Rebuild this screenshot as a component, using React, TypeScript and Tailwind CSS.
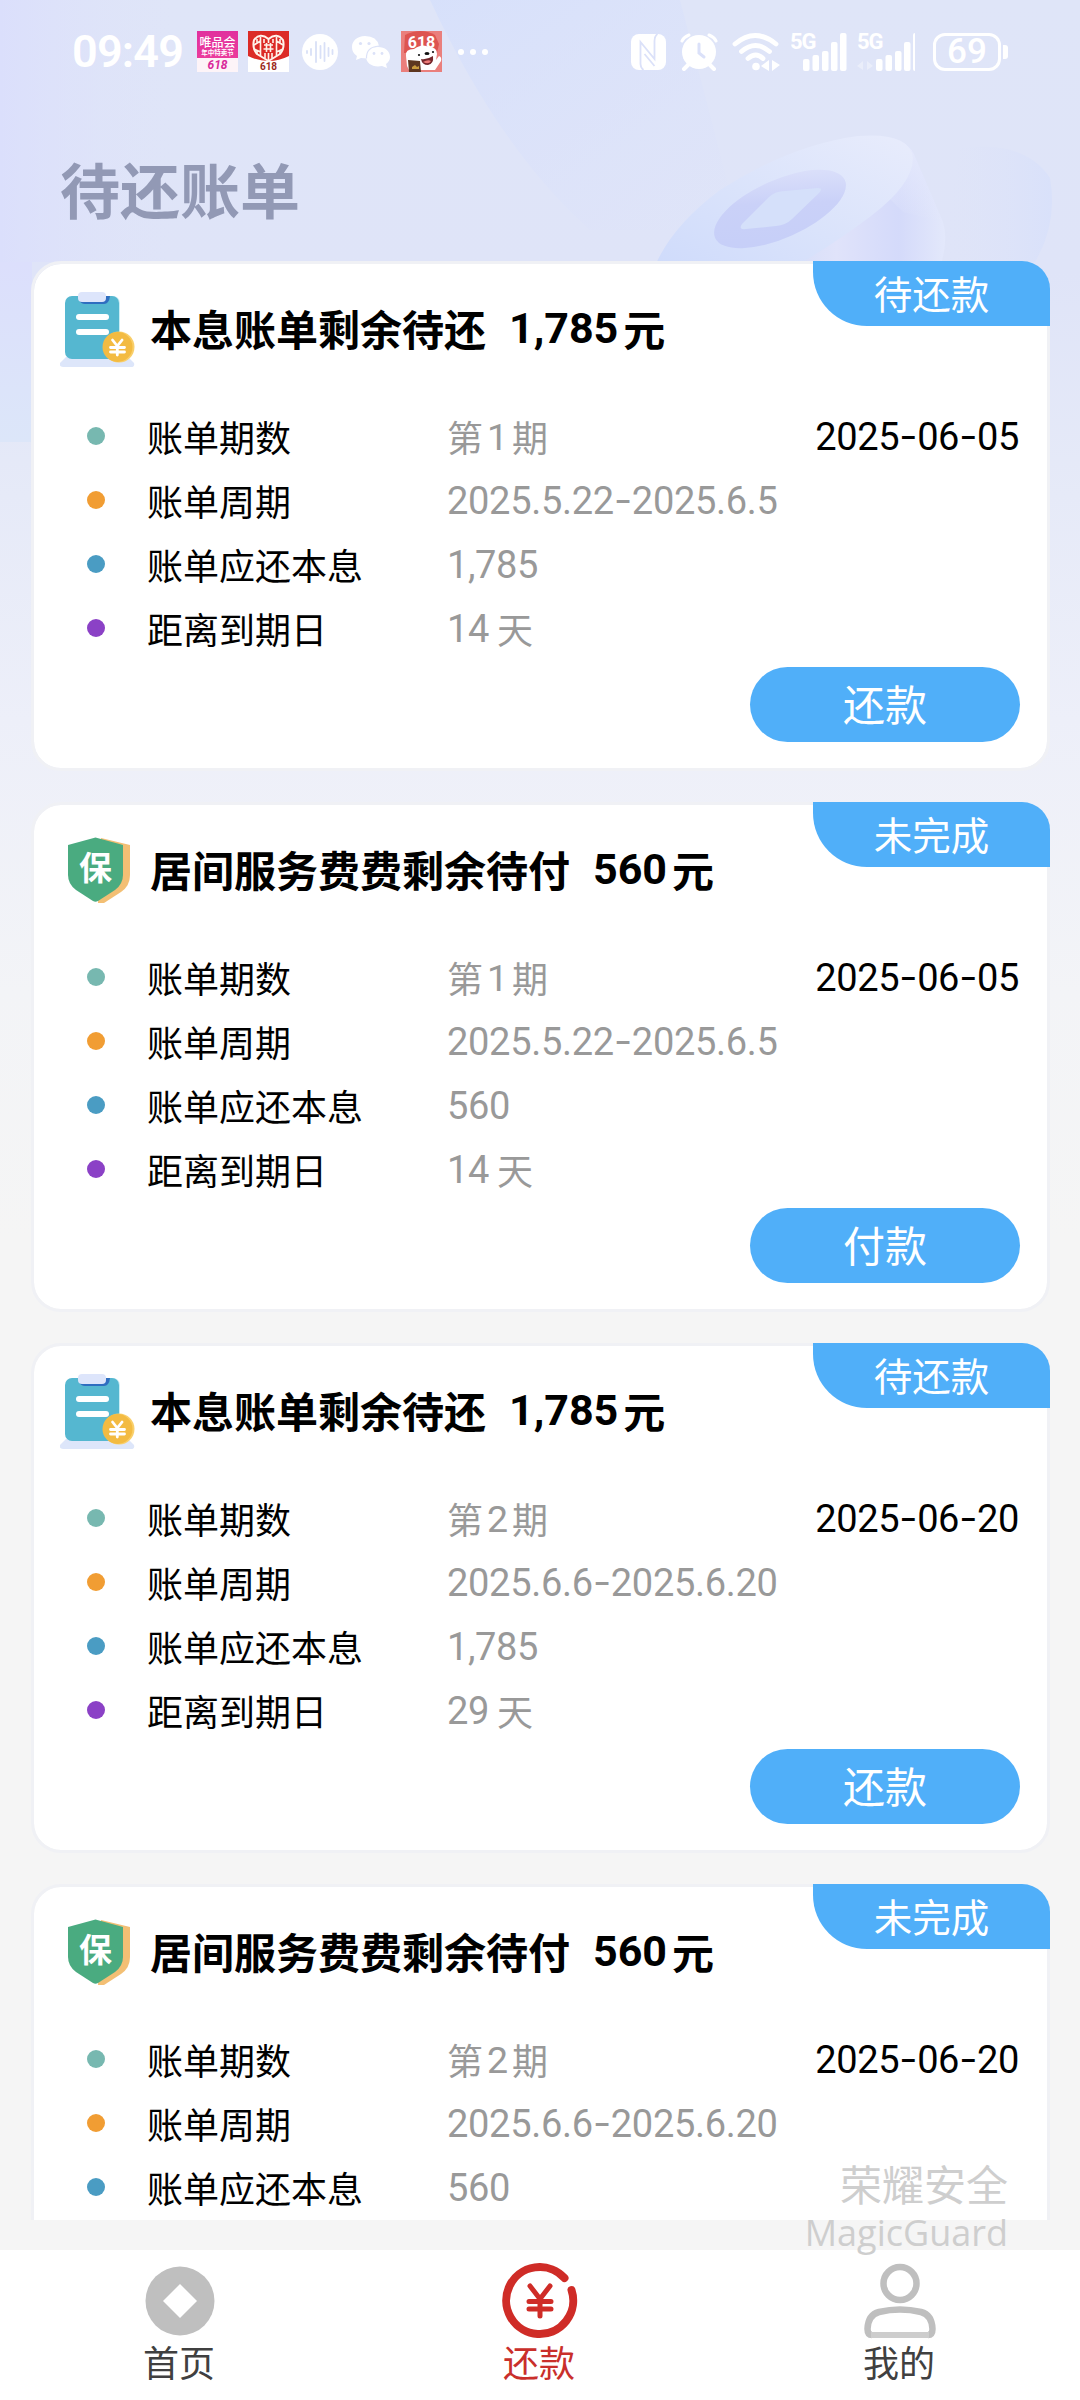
import React from "react";

type Bill = {
  kind: "principal" | "service";
  title: string;
  amount: string;
  tag: string;
  period: string;
  date: string;
  cycle: string;
  due: string;
  days?: string;
  action?: string;
};

const bills: Bill[] = [
  { kind: "principal", title: "本息账单剩余待还", amount: "1,785", tag: "待还款", period: "1", date: "2025-06-05", cycle: "2025.5.22-2025.6.5", due: "1,785", days: "14", action: "还款" },
  { kind: "service", title: "居间服务费费剩余待付", amount: "560", tag: "未完成", period: "1", date: "2025-06-05", cycle: "2025.5.22-2025.6.5", due: "560", days: "14", action: "付款" },
  { kind: "principal", title: "本息账单剩余待还", amount: "1,785", tag: "待还款", period: "2", date: "2025-06-20", cycle: "2025.6.6-2025.6.20", due: "1,785", days: "29", action: "还款" },
  { kind: "service", title: "居间服务费费剩余待付", amount: "560", tag: "未完成", period: "2", date: "2025-06-20", cycle: "2025.6.6-2025.6.20", due: "560" },
];

const CJK = "font-['Noto_Sans_CJK_SC',sans-serif]";
const NUM = "font-['Roboto',sans-serif]";

function Dashes({ text }: { text: string }) {
  const parts = text.split("-");
  return (
    <>
      {parts.map((p, i) => (
        <React.Fragment key={i}>
          {i > 0 && <span className="inline-block w-[18px] text-center origin-center scale-x-[1.4] relative -top-[1px]">-</span>}
          {p}
        </React.Fragment>
      ))}
    </>
  );
}

function BillIcon() {
  return (
    <svg className="w-[76px] h-[76px]" viewBox="0 0 76 76">
      <rect x="10" y="5" width="50" height="62" rx="7" fill="#c9edf5" />
      <path d="M6 66h62l6 6q1 4-3 4H3q-4 0-3-4z" fill="#dde6fa" />
      <rect x="5" y="5" width="54" height="63" rx="7" fill="#55b7d0" />
      <path d="M19 5h31q-1 8-6 8H25q-4 0-6-4z" fill="#2f6ec0" />
      <rect x="18" y="1" width="28" height="10" rx="4" fill="#dde5fb" />
      <rect x="16" y="23" width="33" height="6" rx="3" fill="#fff" />
      <rect x="16" y="38" width="33" height="6" rx="3" fill="#fff" />
      <circle cx="59" cy="56" r="15.5" fill="#f9cf6a" />
      <circle cx="57.500" cy="56" r="15" fill="#f3bb42" />
      <path d="M52.500 49l4.800 6 4.800-6M57.300 55v9M50.500 56.500h14M50.500 61h14" stroke="#fff" strokeWidth="2.800" fill="none" strokeLinecap="round" />
    </svg>
  );
}

function ShieldIcon() {
  return (
    <div className="relative w-[76px] h-[76px]">
      <svg className="w-[76px] h-[76px]" viewBox="0 0 76 76">
        <path d="M41 6l29 7v30q0 11-9 17L44 71h-6z" fill="#f3bf74" />
        <path d="M35.500 5.500L63 13v30q0 9-8 15L38 69q-2.500 1.500-5 0L16 58q-8-6-8-15V13z" fill="#4aab80" />
      </svg>
      <span className={`absolute left-0 top-[15px] w-[71px] h-[38px] leading-[38px] text-center text-white font-bold text-[33px] ${CJK}`}>保</span>
    </div>
  );
}

function Row({ dot, label, children, right }: { dot: string; label: string; children: React.ReactNode; right?: string }) {
  return (
    <div className="flex items-center h-[64px] pb-[3px]">
      <span className={`ml-[53px] w-[18px] h-[18px] rounded-full ${dot}`} />
      <span className="ml-[42px] w-[300px] text-[36px] text-black">{label}</span>
      <span className="text-[#999] flex items-center whitespace-pre text-[36px]">{children}</span>
      {right && <span className={`mt-[3px] ml-auto mr-[28px] text-black text-[38px] tracking-[-0.4px] ${NUM}`}><Dashes text={right} /></span>}
    </div>
  );
}

function Card({ bill }: { bill: Bill }) {
  return (
    <section className="relative w-[1019px] h-[510px] shrink-0 rounded-[30px] border-[3px] border-[#f0f1f5] bg-white bg-clip-padding">
      <div className="absolute -top-[3px] -right-[3px] w-[237px] h-[65px] rounded-tr-[28px] rounded-bl-[54px] bg-[#50aff9] text-white text-[38.500px] leading-[62px] text-center">
        {bill.tag}
      </div>
      <div className="flex items-center mt-[23px] ml-[26px] h-[84px]">
        {bill.kind === "principal" ? <BillIcon /> : <ShieldIcon />}
        <h2 className="ml-[14px] -mt-[3px] flex items-center text-[42px] font-bold text-black leading-none whitespace-nowrap">
          {bill.title}
          <span className={`mt-[2px] ml-[23px] text-[43px] ${NUM}`}>{bill.amount}</span>
          <span className="ml-[5px]">元</span>
        </h2>
      </div>
      <div className="mt-[34px]">
        <Row dot="bg-[#77b8b0]" label="账单期数" right={bill.date}>
          第<span className={`mt-[3px] text-[37.500px] w-[29px] text-center ${NUM}`}>{bill.period}</span>期
        </Row>
        <Row dot="bg-[#f19d33]" label="账单周期">
          <span className={`mt-[3px] text-[38px] tracking-[-0.3px] ${NUM}`}><Dashes text={bill.cycle} /></span>
        </Row>
        <Row dot="bg-[#4a9cc3]" label="账单应还本息">
          <span className={`mt-[3px] text-[38px] tracking-[-0.4px] ${NUM}`}>{bill.due}</span>
        </Row>
        {bill.days && (
          <Row dot="bg-[#8b41c6]" label="距离到期日">
            <span className={`mt-[3px] text-[38px] mr-[8px] tracking-[-0.4px] ${NUM}`}>{bill.days}</span>天
          </Row>
        )}
      </div>
      {bill.action && (
        <button className="block mt-[6px] ml-auto mr-[27px] w-[270px] h-[75px] pb-[3px] rounded-full bg-[#50aff9] text-white text-[42px] leading-[72px] text-center">
          {bill.action}
        </button>
      )}
    </section>
  );
}

function Signal({ gap, faint }: { gap: number; faint?: boolean }) {
  return (
    <div className="relative w-[58px] h-[38px]">
      <span className={`absolute left-0 -top-px text-[22px] leading-[20px] font-bold text-white tracking-[-1px] ${NUM}`}>5G</span>
      <svg className="w-[58px] h-[38px]" viewBox="0 0 58 38" fill="#fff">
        <rect x={gap} y="26" width="6.500" height="12" rx="2" />
        <rect x={gap + 9.500} y="22" width="6.500" height="16" rx="2" />
        <rect x={gap + 19} y="18" width="6.500" height="20" rx="2" />
        <rect x={gap + 28} y="9" width="6.500" height="29" rx="2" />
        <rect x={gap + 37} y="0" width="6.500" height="38" rx="2" />
        {faint && <path d="M6 28v9l-6-4zM10 28v9l6-4z" opacity=".35" />}
      </svg>
    </div>
  );
}

function StatusBar() {
  return (
    <div className="flex items-center h-[103px] text-white">
      <span className={`ml-[72px] w-[113px] text-[45px] leading-[46px] font-semibold tracking-[-0.8px] whitespace-nowrap ${NUM}`}>09:49</span>
      <div className="ml-[12px] w-[41px] h-[41px] bg-linear-to-b from-[#e1309e] to-[#f0419b] flex flex-col items-center overflow-hidden">
        <span className="text-[12px] leading-[12px] mt-[5px] font-medium">唯品会</span>
        <span className="text-[6.500px] leading-[8px] font-bold">年中特卖节</span>
        <div className={`mt-[2px] w-full h-[14px] bg-[#fdf4f8] text-[#d92a9a] text-[12px] leading-[14px] font-bold italic text-center ${NUM}`}>618</div>
      </div>
      <div className="relative ml-[10px] w-[41px] h-[41px] bg-[#dc2b26]">
        <svg className="w-[41px] h-[41px]" viewBox="0 0 41 41">
          <path d="M0 25q10 5 20.500 5T41 25v16H0z" fill="#fff" />
          <g fill="none" stroke="#fff3ea" strokeWidth="1.600" strokeLinejoin="round">
            <path d="M20.500 30L9 23Q4 17 6 9q6-8 14.500-1Q29 1 35 9q2 8-3 14z" fill="#dc2b26" strokeWidth="2" />
            <path d="M12.500 6v19M20.500 8v4M28.500 6v19M6 14l6.500-4M6 18l6.500 3M35 14l-6.500-4M35 18l-6.500 3M16 8v4M25 8v4M17 22v5M24 22v5M20.500 22v7M9 8v4M32 8v4M9 20v3M32 20v3" />
            <path d="M16 14h9M15.500 18h10M18.500 12v9M22.500 12v9" />
          </g>
        </svg>
        <span className={`absolute inset-x-0 bottom-0 text-[#9c2a20] text-[10px] leading-[11px] font-bold text-center ${NUM}`}>618</span>
      </div>
      <svg className="ml-[13px] w-[36px] h-[36px]" viewBox="0 0 36 36">
        <circle cx="18" cy="18" r="18" fill="#fff" />
        <path d="M5 17v2M9 15v6M14 8v20M18.500 12v12M22.500 9v18M26.500 14v8M30.500 16v4" stroke="#d9e0f7" strokeWidth="1.800" strokeLinecap="round" />
      </svg>
      <svg className="ml-[14px] w-[38px] h-[34px]" viewBox="0 0 38 34">
        <path d="M13 1C5 1 0 6 0 12q0 6 5 9l-1 4 5-2 6 .500Q14 13 27 11 25 1 13 1z" fill="#fff" />
        <path d="M26 12c-7 0-12 4-12 10s7 11 16 9l5 2-1-4q4-3 4-7c0-6-5-10-12-10z" fill="#fff" />
        <path d="M27 11q-13 1-12.500 12.500" fill="none" stroke="#dce2f8" strokeWidth="1.200" />
        <g fill="#dce2f8"><circle cx="8.500" cy="8.500" r="1.600" /><circle cx="17" cy="8.500" r="1.600" /><circle cx="22" cy="18.500" r="1.400" /><circle cx="30" cy="18.500" r="1.400" /></g>
      </svg>
      <div className="relative ml-[11px] w-[41px] h-[41px] bg-[#e6686a]">
        <svg className="w-[41px] h-[41px]" viewBox="0 0 41 41">
          <rect width="41" height="41" fill="#ea7f7c" />
          <path d="M4 4q16-8 30 0l4 9-2 9H3z" fill="#dd5450" />
          <path d="M5 25q-1-7 8-7 8-6 15-2 8 0 8 7l-1 6 3-4q3 1 2 5l-6 9H8L6 35z" fill="#fff" />
          <path d="M20 28q6 1 12-3 1 8-5 9-6 0-7-6z" fill="#74262a" />
          <path d="M22 31q5-3 8-1-2 4-8 1z" fill="#ee7b78" />
          <ellipse cx="26" cy="22.500" rx="2.500" ry="1.500" fill="#111" />
          <circle cx="18" cy="24" r="1.100" fill="#111" /><circle cx="32" cy="21" r="1.100" fill="#111" />
          <path d="M7 29l12 1 1 11H8z" fill="#5d3620" />
          <path d="M11 36l3-2 2 2 2-1v3h-7z" fill="#c9993c" />
        </svg>
        <span className={`absolute inset-x-0 top-[4px] text-[16px] leading-[15px] font-bold text-center ${NUM}`}>618</span>
      </div>
      <svg className="ml-[16px] w-[30px] h-[6px]" viewBox="0 0 30 6" fill="#fff"><circle cx="3" cy="3" r="3" /><circle cx="15" cy="3" r="3" /><circle cx="27" cy="3" r="3" /></svg>

      <svg className="ml-[143px] w-[35px] h-[36px]" viewBox="0 0 35 36">
        <rect width="35" height="36" rx="8" fill="#fff" />
        <path d="M12.500 36q-3-2-3-6V8l14 17V7q0-5 3-7" fill="none" stroke="#dbe1f9" strokeWidth="1.800" />
        <path d="M13.500 20l10 12" stroke="#dbe1f9" strokeWidth="1.800" />
      </svg>
      <svg className="ml-[14px] w-[38px] h-[38px]" viewBox="0 0 38 38">
        <circle cx="19" cy="19" r="17" fill="#fff" />
        <path d="M2 8q2-4 7-6M36 8q-2-4-7-6" stroke="#fff" strokeWidth="3" strokeLinecap="round" fill="none" />
        <path d="M9 31l-5 5M29 31l5 5" stroke="#fff" strokeWidth="4" strokeLinecap="round" />
        <path d="M19 11v9l5 4" stroke="#dbe1f9" strokeWidth="3" fill="none" strokeLinecap="round" />
      </svg>
      <svg className="ml-[14px] w-[48px] h-[38px]" viewBox="0 0 48 38">
        <g fill="none" stroke="#fff" strokeWidth="4.800" strokeLinecap="round"><path d="M3 11q20-17 41 0" /><path d="M9.500 18.500q14-12 28 0" /><path d="M16 25.500q8-7 15 0" /></g>
        <circle cx="24" cy="33.500" r="3.800" fill="#fff" />
        <path d="M37 27v11l-8-5zM40 27l8 5-8 6z" fill="#fff" />
      </svg>
      <div className="ml-[10px]"><Signal gap={13} /></div>
      <div className="ml-[9px]"><Signal gap={19} faint /></div>
      <div className="ml-[18px] w-[68px] h-[38px] box-border rounded-[12px] border-[3.500px] border-white flex items-center justify-center">
        <span className={`text-[35px] leading-[30px] font-medium ${NUM}`}>69</span>
      </div>
      <span className="ml-[2px] w-[5px] h-[14px] bg-white rounded-r-[3px]" />
    </div>
  );
}

function Backdrop() {
  return (
    <svg className="absolute left-0 top-0 w-[1080px] h-[1240px]" viewBox="0 0 1080 1240">
      <defs>
        <linearGradient id="sky" x1="0" y1="0" x2="0" y2="1"><stop offset="0" stopColor="#dfe5f8" /><stop offset=".22" stopColor="#dfe4f8" /><stop offset=".4" stopColor="#e6eaf8" /><stop offset=".58" stopColor="#edeff9" /><stop offset=".8" stopColor="#f3f4f7" /><stop offset="1" stopColor="#f5f5f5" /></linearGradient>
        <linearGradient id="beam" x1="0" y1="0" x2="1" y2="1"><stop offset="0" stopColor="#d6e0fb" stopOpacity=".9" /><stop offset="1" stopColor="#dbe1fb" stopOpacity="0" /></linearGradient>
        <linearGradient id="edge" x1="0" y1="0" x2="1" y2="0"><stop offset="0" stopColor="#dbdffc" /><stop offset="1" stopColor="#dfe4f8" stopOpacity="0" /></linearGradient>
        <linearGradient id="edgeLow" x1="0" y1="0" x2="0" y2="1"><stop offset="0" stopColor="#dcdffc" /><stop offset="1" stopColor="#dce6f9" /></linearGradient>
        <linearGradient id="face" x1="0" y1="1" x2="1" y2="0"><stop offset="0" stopColor="#cfdbfb" /><stop offset=".45" stopColor="#dae3fb" /><stop offset="1" stopColor="#e8ecfc" /></linearGradient>
        <linearGradient id="side" x1="0" y1="0" x2="1" y2="0"><stop offset="0" stopColor="#d6def9" /><stop offset=".3" stopColor="#e0e3fa" /><stop offset=".7" stopColor="#d4dafa" /><stop offset="1" stopColor="#e3e8fb" /></linearGradient>
        <linearGradient id="sideTop" x1="0" y1="0" x2="0" y2="1"><stop offset="0" stopColor="#e6eafc" /><stop offset="1" stopColor="#e6eafc" stopOpacity="0" /></linearGradient>
        <linearGradient id="ring" x1="0" y1="1" x2="1" y2="0"><stop offset="0" stopColor="#c5cef8" /><stop offset=".55" stopColor="#cad1f8" /><stop offset="1" stopColor="#e2e6fb" /></linearGradient>
        <linearGradient id="far" x1="0" y1="0" x2="1" y2="0"><stop offset="0" stopColor="#dfe4f8" stopOpacity="0" /><stop offset="1" stopColor="#d9e1fa" /></linearGradient>
      </defs>
      <rect width="1080" height="1240" fill="url(#sky)" />
      <rect width="180" height="262" fill="url(#edge)" />
      <rect y="262" width="32" height="180" fill="url(#edgeLow)" />
      <path d="M430 0h250l60 230h-150Q500 150 430 0z" fill="url(#beam)" />
      <path d="M960 148q65-8 90 30 8 45-15 84h-95z" fill="url(#far)" />
      <path d="M870 136q36 0 44 18l29 68q6 20-4 48H790z" fill="url(#side)" />
      <path d="M870 136q36 0 44 18l29 68-40-10-40-40z" fill="url(#sideTop)" />
      <path d="M655 266Q672 226 720 190 790 145 858 136q52-4 55 22 0 26-42 58-34 26-75 50z" fill="url(#face)" />
      <ellipse cx="780" cy="209" rx="71" ry="29" transform="rotate(-24 780 209)" fill="url(#ring)" />
      <path d="M742 224l27-27q6-6 16-6l33-3q6 0 0 6l-26 25q-6 6-16 7l-30 3q-8 1-4-5z" fill="#d5e0fa" />
    </svg>
  );
}

function NavItem({ icon, label, color }: { icon: React.ReactNode; label: string; color: string }) {
  return (
    <div className={`flex-1 flex flex-col items-center ${color}`}>
      <div className="mt-[12px] h-[78px] flex items-center">{icon}</div>
      <span className="-mt-[2px] pr-[2px] text-[36px] leading-[46px]">{label}</span>
    </div>
  );
}

export default function App() {
  return (
    <div className={`relative w-[1080px] h-[2400px] overflow-hidden bg-[#f5f5f5] flex flex-col ${CJK}`}>
      <Backdrop />
      <header className="relative h-[261px]">
        <StatusBar />
        <h1 className="ml-[60px] mt-[52px] text-[60px] leading-[66px] font-bold text-[#9299b5]">待还账单</h1>
      </header>
      <main className="relative h-[1959px] overflow-hidden pl-[31px] flex flex-col gap-[31px]">
        {bills.map((b, i) => <Card key={i} bill={b} />)}
      </main>
      <nav className="relative mt-[30px] h-[150px] bg-white flex">
        <NavItem
          label="首页"
          color="text-[#404040]"
          icon={<svg className="w-[70px] h-[70px]" viewBox="0 0 70 70"><circle cx="35" cy="35" r="34.500" fill="#bfbfbf" /><path d="M35 18l17 17-17 17-17-17z" fill="#fff" /></svg>}
        />
        <NavItem
          label="还款"
          color="text-[#c92f2b]"
          icon={
            <svg className="w-[76px] h-[76px]" viewBox="0 0 76 76" fill="none" stroke="#cf2c27" strokeLinecap="round">
              <path d="M62.500 15A33.500 33.500 0 1 0 69.500 27" strokeWidth="8" />
              <path d="M28 23l10 13 10-13M38 36v17M27 38.500h22M27 46h22" strokeWidth="5" />
            </svg>
          }
        />
        <NavItem
          label="我的"
          color="text-[#404040]"
          icon={
            <svg className="w-[72px] h-[76px]" viewBox="0 0 72 76" fill="none" stroke="#bfbfbf" strokeWidth="6.500">
              <circle cx="36" cy="20.500" r="16.500" />
              <path d="M8 72Q3.500 72 3.500 66 4 52 15 49q21-5 42 0 11 3 11.500 17 0 6-4.500 6" />
              <path d="M7 72h58" stroke="#cdcdcd" strokeWidth="6" />
            </svg>
          }
        />
      </nav>
      <div className="absolute right-[72px] top-[2157px] flex flex-col items-end text-[#cecece]">
        <span className="text-[42px] leading-[52px]">荣耀安全</span>
        <span className="mt-[4px] text-[36px] leading-[40px] font-['Open_Sans',sans-serif]">MagicGuard</span>
      </div>
    </div>
  );
}
